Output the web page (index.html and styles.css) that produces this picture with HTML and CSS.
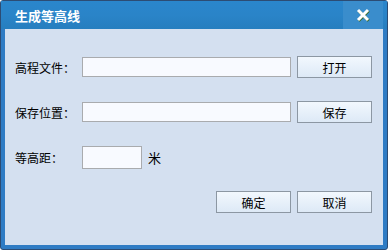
FILE: index.html
```html
<!DOCTYPE html>
<html lang="zh">
<head>
    <meta charset="UTF-8">
    <title>生成等高线</title>
    <link rel="stylesheet" href="styles.css">
</head>
<body>
    <div class="window">
        <div class="titlebar">
            <span class="title">生成等高线</span>
            <button class="close">
                <svg width="14" height="14" viewBox="0 0 14 14">
                    <path d="M2 2 L12 12 M12 2 L2 12" stroke="#3a6a2a" stroke-width="3" transform="translate(0.6,0.8)"/>
                    <path d="M2 2 L12 12 M12 2 L2 12" stroke="#fff" stroke-width="3"/>
                </svg>
            </button>
        </div>
        <div class="content">
            <div class="row">
                <label class="label">高程文件：</label>
                <input class="field" type="text">
                <button class="btn">打开</button>
            </div>
            <div class="row">
                <label class="label">保存位置：</label>
                <input class="field" type="text">
                <button class="btn">保存</button>
            </div>
            <div class="row">
                <label class="label">等高距：</label>
                <input class="field small" type="text">
                <span class="unit">米</span>
            </div>
            <div class="row actions">
                <button class="btn">确定</button>
                <button class="btn">取消</button>
            </div>
        </div>
    </div>
</body>
</html>
```

FILE: styles.css
```css
body {
    margin: 0;
    font-family: "Noto Sans CJK SC", "DejaVu Sans", sans-serif;
    font-size: 12px;
}

.window {
    width: 388px;
    height: 250px;
    box-sizing: border-box;
    border: 1px solid #2c4c74;
    border-radius: 3px;
    background-color: #2f7cc4;
    padding: 0 4px 4px 4px;
    display: flex;
    flex-direction: column;
}

.titlebar {
    height: 28px;
    margin: 0 -4px;
    padding-left: 14px;
    display: flex;
    align-items: center;
    background: linear-gradient(180deg, #2a86cc 0%, #2a84c8 50%, #267ebf 100%);
}

.title {
    flex: 1;
    color: #fff;
    font-weight: bold;
    font-size: 13px;
}

.close {
    width: 40px;
    height: 28px;
    margin-right: 4px;
    border: 0;
    padding: 0;
    background-color: #3a8dcc;
    display: flex;
    align-items: center;
    justify-content: center;
}

.content {
    flex: 1;
    background-color: #d4e0f0;
    padding: 27px 11px 0 10px;
    display: flex;
    flex-direction: column;
    gap: 23px;
}

.row {
    display: flex;
    align-items: center;
    height: 22px;
}

.label {
    width: 67px;
    color: #000;
}

.field {
    width: 209px;
    height: 20px;
    box-sizing: border-box;
    border: 1px solid #a9abae;
    background-color: #f8faff;
    margin: 0 6px 0 0;
    padding: 0;
}

.field.small {
    width: 60px;
    height: 23px;
}

.unit {
    font-size: 13px;
}

.btn {
    width: 75px;
    height: 22px;
    box-sizing: border-box;
    border: 1px solid #8c97a3;
    background: linear-gradient(180deg, #f2f8fe 0%, #dde9f6 100%);
    font-family: inherit;
    font-size: 12px;
    color: #000;
    padding: 0;
}

.actions {
    justify-content: flex-end;
    gap: 6px;
}
```
